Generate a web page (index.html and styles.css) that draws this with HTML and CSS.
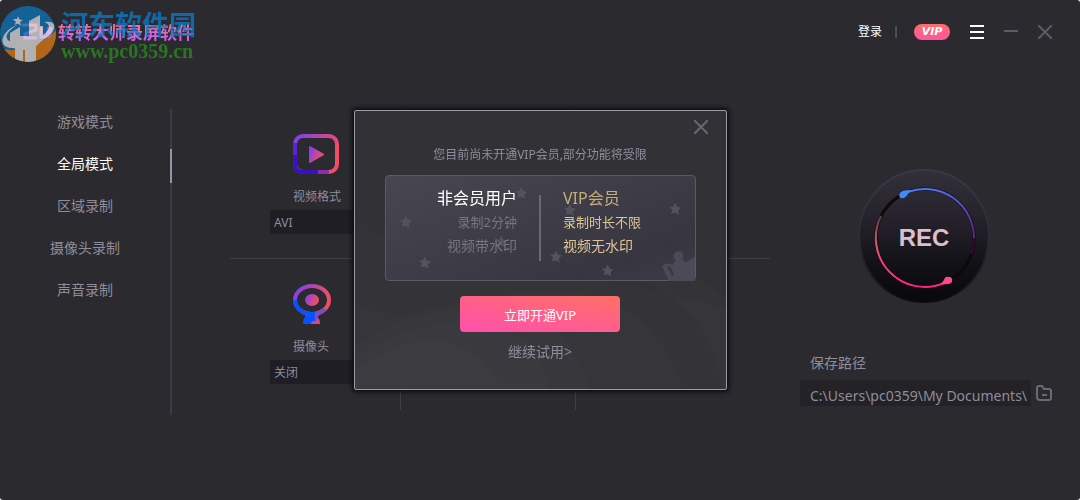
FILE: index.html
```html
<!DOCTYPE html>
<html lang="zh-CN">
<head>
    <meta charset="UTF-8">
    <meta name="viewport" content="width=device-width, initial-scale=1.0">
    <title>转转大师录屏软件</title>
    <link rel="stylesheet" href="styles.css">
</head>
<body>
    <div class="app">
        <header class="topbar">
            <div class="brand">
                <svg class="brand-mark" width="36" height="20" viewBox="0 0 36 20" aria-hidden="true">
                    <defs>
                        <linearGradient id="brand" x1="0" y1="0" x2="0" y2="1">
                            <stop offset="0" stop-color="#ff6f9c"/>
                            <stop offset="1" stop-color="#b45cff"/>
                        </linearGradient>
                    </defs>
                    <path d="M2 3H16V8L5 12V16H17M21 5V15H24Q28 15 28 11V5M28 15Q31 14 31 5" fill="none" stroke="url(#brand)" stroke-width="3"/>
                </svg>
                <span class="brand-name">转转大师录屏软件</span>
                <div class="stamp">
                    <svg width="58" height="58" viewBox="0 0 58 58" aria-hidden="true">
                        <defs>
                            <clipPath id="disc"><circle cx="28" cy="28" r="28"/></clipPath>
                        </defs>
                        <g clip-path="url(#disc)">
                            <rect width="58" height="58" fill="#0b74b8"/>
                            <path d="M0 42C18 48 42 40 58 22V58H0Z" fill="#e07a10"/>
                            <path d="M10 27L20 21V30H29V15L40 9V20H43V34L36 40V58H25V44L23 44V58H15V42L10 40Z" fill="#dedee0"/>
                        </g>
                        <path d="M17 19C3 24-2 38 7 41C21 46 45 37 53 25C57 17 51 15 44 16C51 18 50 23 44 28C33 37 15 40 8 34C4 30 9 24 17 19Z" fill="#dedee0"/>
                        <path d="M18 10L19.500 13.500L23 14L20 16L21 20L18 17.500L14.500 19L16 16L13 13L17 13Z" fill="#dedee0"/>
                    </svg>
                    <div class="stamp-text">
                        <span class="stamp-name">河东软件园</span>
                        <span class="stamp-url">www.pc0359.cn</span>
                    </div>
                </div>
            </div>
            <div class="tools">
                <a href="#" class="login">登录</a>
                <span class="tools-line"></span>
                <a href="#" class="vip-badge">VIP</a>
                <button class="icon-btn menu" aria-label="菜单">
                    <svg width="14" height="14" viewBox="0 0 14 14"><path d="M0 1H14M0 7H14M0 13H14" stroke="#fff" stroke-width="2"/></svg>
                </button>
                <button class="icon-btn" aria-label="最小化">
                    <svg width="14" height="14" viewBox="0 0 14 14"><path d="M0 6H14" stroke="#5d5b68" stroke-width="2"/></svg>
                </button>
                <button class="icon-btn" aria-label="关闭窗口">
                    <svg width="14" height="14" viewBox="0 0 14 14"><path d="M0 0L14 14M14 0L0 14" stroke="#5d5b68" stroke-width="2"/></svg>
                </button>
            </div>
        </header>

        <main class="content">
            <nav class="modes">
                <a href="#">游戏模式</a>
                <a href="#" class="active">全局模式</a>
                <a href="#">区域录制</a>
                <a href="#">摄像头录制</a>
                <a href="#">声音录制</a>
            </nav>

            <section class="settings">
                <div class="row">
                    <div class="cell">
                        <svg width="46" height="40" viewBox="0 0 46 40" aria-hidden="true">
                            <defs>
                                <linearGradient id="warm" x1="0" y1="0" x2="1" y2="0.400">
                                    <stop offset="0" stop-color="#7b3ff2"/>
                                    <stop offset="1" stop-color="#f34d64"/>
                                </linearGradient>
                            </defs>
                            <rect x="2" y="2" width="42" height="36" rx="8" fill="none" stroke="url(#warm)" stroke-width="4"/>
                            <path d="M2 9V21" stroke="#5a25cf" stroke-width="4"/>
                            <path d="M2 21V30Q2 38 10 38H25" fill="none" stroke="#3a10c4" stroke-width="4"/>
                            <path d="M25 38H36" stroke="#8a2fa8" stroke-width="4"/>
                            <path d="M17 13L30 20.500L17 28Z" fill="url(#warm)" stroke="url(#warm)" stroke-width="2" stroke-linejoin="round"/>
                        </svg>
                        <label for="format">视频格式</label>
                        <div class="select">
                            <select id="format">
                                <option>AVI</option>
                            </select>
                        </div>
                    </div>
                    <div class="cell"></div>
                    <div class="cell"></div>
                </div>
                <div class="row">
                    <div class="cell">
                        <svg width="38" height="40" viewBox="0 0 38 40" aria-hidden="true">
                            <path d="M12 29H26L24 33Q27 35 27 40H10Q10 35 12 33Z" fill="#0652ff"/>
                            <path d="M22 28L27 30L24 33Q27 35 27 40H18Q18 37 22 37Z" fill="#d8487f"/>
                            <path d="M22 28H27L24 36L22 38Z" fill="#7d4abf"/>
                            <ellipse cx="19" cy="16" rx="17" ry="14" fill="none" stroke="url(#warm)" stroke-width="4"/>
                            <path d="M2 16C2 24 10 30 19 30H22" fill="none" stroke="#0652ff" stroke-width="4"/>
                            <path d="M22 30Q28 29 32 25" fill="none" stroke="#7d4abf" stroke-width="4"/>
                            <ellipse cx="19" cy="16" rx="7" ry="6" fill="url(#warm)"/>
                        </svg>
                        <label for="camera">摄像头</label>
                        <div class="select">
                            <select id="camera">
                                <option>关闭</option>
                            </select>
                        </div>
                    </div>
                    <div class="cell"></div>
                    <div class="cell"></div>
                </div>
            </section>

            <section class="record">
                <button class="rec-btn">
                    <svg width="132" height="134" viewBox="0 0 132 134" aria-hidden="true">
                        <defs>
                            <linearGradient id="knob" x1="0" y1="0" x2="0" y2="1">
                                <stop offset="0" stop-color="#323039"/>
                                <stop offset="0.400" stop-color="#24212b"/>
                                <stop offset="0.700" stop-color="#131217"/>
                                <stop offset="1" stop-color="#08080a"/>
                            </linearGradient>
                            <linearGradient id="edge" x1="0" y1="0" x2="0" y2="1">
                                <stop offset="0" stop-color="#3a3845"/>
                                <stop offset="0.600" stop-color="#2b2a32"/>
                                <stop offset="1" stop-color="#0b0b0d"/>
                            </linearGradient>
                            <linearGradient id="blue" x1="0" y1="0" x2="0.700" y2="1">
                                <stop offset="0" stop-color="#4d7dff"/>
                                <stop offset="0.500" stop-color="#5a5de0"/>
                                <stop offset="1" stop-color="#5a2c88"/>
                            </linearGradient>
                            <linearGradient id="pink" x1="0" y1="0" x2="0" y2="1">
                                <stop offset="0" stop-color="#5b4038"/>
                                <stop offset="0.400" stop-color="#e0596c"/>
                                <stop offset="1" stop-color="#ff2284"/>
                            </linearGradient>
                        </defs>
                        <ellipse cx="66" cy="67" rx="65" ry="66" fill="url(#knob)" stroke="url(#edge)" stroke-width="2"/>
                        <circle cx="67" cy="69" r="49" fill="none" stroke="#0c090d" stroke-width="3"/>
                        <path d="M50 23A49 49 0 0 1 116 69" fill="none" stroke="url(#blue)" stroke-width="2"/>
                        <path d="M116 69Q116 78 113 85" fill="none" stroke="#3b0838" stroke-width="2"/>
                        <path d="M23 47A49 49 0 0 0 86 114" fill="none" stroke="url(#pink)" stroke-width="2"/>
                        <path d="M53 21Q44 21 42 24Q40 28 43 29Q47 30 50 25Z" fill="#3e8cff"/>
                        <path d="M83 115Q92 116 94 113Q95 108 91 108Q87 107 86 111Z" fill="#ff4a89"/>
                    </svg>
                    <span class="rec-text">REC</span>
                </button>
                <div class="path">
                    <label for="save-path">保存路径</label>
                    <div class="path-row">
                        <input type="text" id="save-path" value="C:\Users\pc0359\My Documents\">
                        <button class="icon-btn" aria-label="选择文件夹">
                            <svg width="16" height="16" viewBox="0 0 16 16"><path d="M1 12V3Q1 1 3 1H6L8 4H13Q15 4 15 6V13Q15 15 13 15H4Q1 15 1 12ZM6 10H11" fill="none" stroke="#6b6975" stroke-width="2"/></svg>
                        </button>
                    </div>
                </div>
            </section>
        </main>
    </div>

    <div class="overlay">
        <div class="dialog" role="dialog" aria-label="VIP会员">
            <svg class="waves" viewBox="0 0 373 280" preserveAspectRatio="none" aria-hidden="true">
                <g fill="#fff" fill-opacity="0.010">
                    <path d="M0 110Q80 160 180 165T373 200V280H0Z"/>
                    <path d="M0 195Q60 220 150 185Q290 160 330 280H0Z"/>
                    <path d="M0 235Q110 165 190 210Q225 235 235 280H0Z"/>
                    <path d="M0 245Q100 190 170 230Q190 245 195 280H0Z"/>
                    <path d="M0 260Q70 210 120 245Q140 260 148 280H0Z"/>
                    <path d="M230 110Q330 150 373 190V280H368Q360 180 230 150Z"/>
                </g>
            </svg>
            <button class="icon-btn dialog-close" aria-label="关闭">
                <svg width="14" height="14" viewBox="0 0 14 14"><path d="M0 0L14 14M14 0L0 14" stroke="#686674" stroke-width="2"/></svg>
            </button>
            <p class="notice">您目前尚未开通VIP会员,部分功能将受限</p>
            <div class="compare">
                <svg class="stars" viewBox="0 0 311 106" aria-hidden="true">
                    <defs>
                        <path id="star" d="M0-6L2-2L6-1L3 2L4 6L0 4L-4 5L-3 1L-6-2L-2-2Z"/>
                    </defs>
                    <g fill="#53525d">
                        <use href="#star" x="20" y="46"/>
                        <use href="#star" x="39" y="87"/>
                        <use href="#star" x="136" y="17"/>
                        <use href="#star" x="116" y="66"/>
                        <use href="#star" x="185" y="34"/>
                        <use href="#star" x="171" y="81"/>
                        <use href="#star" x="223" y="95"/>
                        <use href="#star" x="291" y="33"/>
                    </g>
                    <path d="M285 106L278 91Q279 88 284 88L288 89L292 85A5 5 0 1 1 298 84L302 87L311 81V106ZM283 91L288 101L290 99L286 91Z" fill="#4b4a56" fill-rule="evenodd"/>
                </svg>
                <div class="plan free">
                    <h2>非会员用户</h2>
                    <p class="limit">录制2分钟</p>
                    <p>视频带水印</p>
                </div>
                <div class="plan vip">
                    <h2>VIP会员</h2>
                    <p class="limit">录制时长不限</p>
                    <p>视频无水印</p>
                </div>
            </div>
            <button class="buy">立即开通VIP</button>
            <a href="#" class="trial">继续试用&gt;</a>
        </div>
    </div>
</body>
</html>
```
FILE: styles.css
```css
* {
    box-sizing: border-box;
}
body {
    margin: 0;
    background-color: #fff;
    color: #8f8d9c;
    font-family: "Noto Sans", "Noto Sans CJK SC", sans-serif;
    font-size: 14px;
    line-height: 20px;
}
a {
    color: inherit;
    text-decoration: none;
}
button, input, select {
    font-family: inherit;
    color: inherit;
    border: none;
    margin: 0;
    padding: 0;
}
button {
    cursor: pointer;
}
svg {
    display: block;
}
.app {
    min-height: 100vh;
    background-color: #2b2a2f;
    border-radius: 3px;
}

/* top bar */
.topbar {
    display: flex;
    justify-content: space-between;
    align-items: center;
    height: 64px;
    padding: 0 28px 0 20px;
}
.brand {
    position: relative;
    display: flex;
    align-items: center;
    gap: 2px;
}
.brand-name {
    padding-top: 2px;
    font-size: 17px;
    font-weight: bold;
    background: linear-gradient(#ff7385, #c45cff);
    -webkit-background-clip: text;
    background-clip: text;
    color: transparent;
    white-space: nowrap;
}
.stamp {
    position: absolute;
    left: -20px;
    top: -15px;
    display: flex;
    gap: 3px;
    opacity: 0.75;
}
.stamp-text {
    display: flex;
    flex-direction: column;
    padding-top: 3px;
    white-space: nowrap;
}
.stamp-name {
    color: #0b7ccb;
    font-size: 27px;
    font-weight: bold;
    line-height: 32px;
}
.stamp-url {
    color: #2a901c;
    font-family: "Liberation Serif", serif;
    font-size: 20px;
    font-weight: bold;
    line-height: 20px;
}
.tools {
    display: flex;
    align-items: center;
    gap: 20px;
}
.login {
    color: #fff;
    font-size: 12px;
}
.tools-line {
    width: 2px;
    height: 12px;
    margin: 0 -3px 0 -7px;
    background-color: #4d4b57;
}
.vip-badge {
    width: 36px;
    height: 16px;
    border-radius: 8px;
    background: linear-gradient(#ff6d6c, #ff55a0);
    color: #fff;
    font-family: "DejaVu Sans", sans-serif;
    font-size: 11px;
    font-weight: bold;
    font-style: italic;
    line-height: 16px;
    text-align: center;
}
.icon-btn {
    background: none;
}

/* main area */
.content {
    display: grid;
    grid-template-columns: 172px 1fr 280px;
    padding-top: 45px;
}
.modes {
    display: flex;
    flex-direction: column;
    gap: 16px;
    height: 306px;
    border-right: 2px solid #3d3c44;
    text-align: center;
}
.modes a {
    position: relative;
    line-height: 26px;
}
.modes .active {
    color: #fff;
}
.modes .active::after {
    content: "";
    position: absolute;
    top: -2px;
    right: -2px;
    width: 2px;
    height: 34px;
    background-color: #9694aa;
}
.settings {
    padding: 0 30px 0 58px;
}
.row {
    display: grid;
    grid-template-columns: 171px 175px 1fr;
}
.row + .row {
    border-top: 1px solid #403f46;
}
.cell {
    min-height: 149px;
    padding-top: 25px;
    border-right: 1px solid #403f46;
}
.row + .row .cell {
    min-height: 151px;
}
.cell:first-child {
    padding-left: 40px;
}
.cell:last-child {
    border-right: none;
}
.cell svg {
    margin-left: 23px;
}
.cell label {
    display: block;
    margin: 13px 0 3px 23px;
    font-size: 12px;
}
.select {
    position: relative;
    width: 93px;
}
.select select {
    display: block;
    width: 100%;
    height: 24px;
    padding: 0 4px;
    border-radius: 2px;
    background-color: #1f1e24;
    font-size: 12px;
    appearance: none;
}
.select::after {
    content: "";
    position: absolute;
    top: 10px;
    right: 4px;
    border: 3px solid transparent;
    border-top-color: #5d5b68;
    pointer-events: none;
}

/* record button and save path */
.record {
    padding: 60px 28px 0 0;
}
.rec-btn {
    display: grid;
    margin-left: 58px;
    border-radius: 50%;
    background: none;
}
.rec-btn svg, .rec-text {
    grid-area: 1 / 1;
    place-self: center;
}
.rec-text {
    padding-top: 4px;
    color: #dcbfcb;
    font-family: "Liberation Sans", Arial, sans-serif;
    font-size: 24px;
    font-weight: bold;
}
.path {
    margin-top: 50px;
}
.path label {
    margin-left: 10px;
}
.path-row {
    display: flex;
    align-items: center;
    gap: 5px;
    margin-top: 7px;
}
.path-row input {
    flex: 1;
    min-width: 0;
    height: 26px;
    padding: 4px 0 0 10px;
    background-color: #232227;
    font-size: 14px;
}

/* vip dialog */
.overlay {
    position: fixed;
    inset: 0;
    display: flex;
    justify-content: center;
    align-items: center;
}
.dialog {
    position: relative;
    display: flex;
    flex-direction: column;
    align-items: center;
    width: 373px;
    padding: 34px 30px 27px;
    border: 1px solid #9d9baa;
    border-radius: 2px;
    background-color: #323136;
    box-shadow: 0 0 4px 2px #0c0c0e;
}
.dialog > * {
    position: relative;
}
.dialog > .waves {
    position: absolute;
    inset: 0;
    width: 100%;
    height: 100%;
}
.dialog > .dialog-close {
    position: absolute;
    top: 9px;
    right: 18px;
}
.notice {
    margin: 0 0 10px;
    font-size: 12px;
}
.compare {
    display: grid;
    grid-template-columns: 1fr 1fr;
    width: 100%;
    height: 106px;
    padding-top: 10px;
    border: 1px solid #5b5a66;
    border-radius: 4px;
    background: linear-gradient(160deg, #484751, #363540 80%, #3d3c47);
}
.stars {
    position: absolute;
    inset: 0;
    width: 100%;
}
.plan {
    position: relative;
    height: 76px;
}
.plan h2 {
    margin: 0;
    font-size: 16px;
    font-weight: normal;
    line-height: 24px;
}
.plan p {
    margin: 0;
    line-height: 24px;
}
.plan .limit {
    font-size: 13px;
}
.free {
    padding-right: 23px;
    color: #77767c;
    text-align: right;
}
.free h2 {
    color: #fff;
}
.free::after {
    content: "";
    position: absolute;
    top: 9px;
    right: -1px;
    width: 2px;
    height: 66px;
    background-color: #696873;
}
.vip {
    padding-left: 23px;
    color: #e0c696;
}
.vip h2 {
    color: #c9ad7c;
}
.buy {
    width: 160px;
    height: 36px;
    margin-top: 15px;
    border-radius: 4px;
    background: linear-gradient(10deg, #ff4fae, #ff7065);
    color: #fff;
    font-size: 13px;
}
.trial {
    margin-top: 10px;
}
```
